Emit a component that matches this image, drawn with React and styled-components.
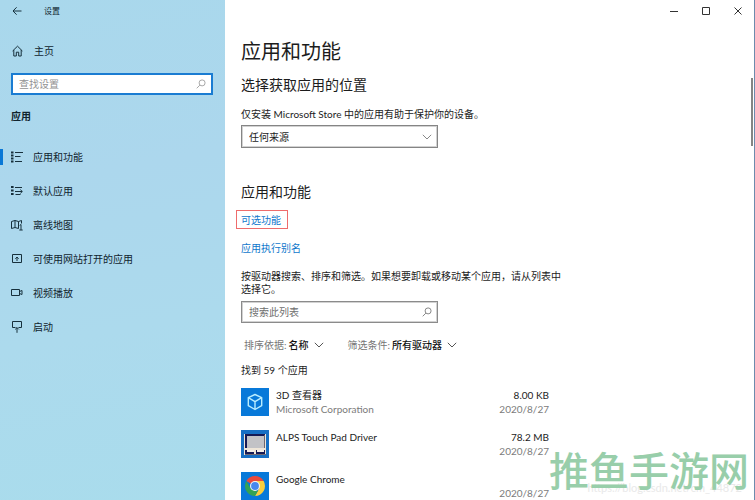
import React from "react";
import styled, { createGlobalStyle } from "styled-components";

const GlobalStyle = createGlobalStyle`
  * { box-sizing: border-box; }
  body {
    margin: 0;
    background: #fff;
    color: #1c1c1c;
    font-family: Lato, "Noto Sans CJK SC", sans-serif;
    font-size: 10px;
    line-height: 14px;
  }
  h1, h2, p, ul { margin: 0; padding: 0; font-weight: 400; }
  ul { list-style: none; }
  button, input, select { font: inherit; color: inherit; }
  a { color: inherit; text-decoration: none; }
  svg { display: block; flex: none; }
`;

const Window = styled.div`
  position: relative;
  display: grid;
  grid-template-columns: 225px minmax(0, 1fr);
  height: 100vh;
  overflow: hidden;
  border-right: 1px solid #6c8bad;
`;

const Sidebar = styled.aside`
  background: linear-gradient(170deg, #a9d8ec 0%, #acd7ed 35%, #acdaed 65%, #a9dcec 100%);
  color: #10242e;
`;

const SidebarTitle = styled.header`
  display: flex;
  align-items: center;
  gap: 22px;
  height: 22px;
  padding-left: 12px;
  font-size: 8px;
`;

const IconButton = styled.button`
  display: flex;
  align-items: center;
  justify-content: center;
  width: ${(p) => p.$width};
  height: 22px;
  padding: 0;
  border: 0;
  background: none;
`;

const HomeLink = styled.a`
  display: flex;
  align-items: center;
  gap: 11px;
  height: 14px;
  margin: 22px 0 15px;
  padding-left: 12px;
`;

const SearchField = styled.label`
  display: flex;
  align-items: center;
  width: ${(p) => p.$width};
  height: 22px;
  margin-left: ${(p) => (p.$active ? "11px" : "0")};
  padding: 0 5px 0 ${(p) => (p.$active ? "6px" : "7px")};
  border: ${(p) => (p.$active ? "2px solid #1a7cd2" : "1px solid #8b8b8b")};
  outline: ${(p) => (p.$active ? "0" : "1px solid #d2d2d2")};
  outline-offset: -2px;
  background: #fff;
`;

const SearchInput = styled.input`
  flex: 1;
  min-width: 0;
  padding: 0;
  border: 0;
  outline: 0;
  background: none;
  &::placeholder { color: ${(p) => p.$hint}; opacity: 1; }
`;

const SidebarHeading = styled.h2`
  margin: 14px 0 17px 11px;
  font-size: 10px;
  line-height: 14px;
  font-weight: 700;
`;

const NavLink = styled.a`
  display: flex;
  align-items: center;
  height: 34px;
  &::before {
    content: "";
    width: 3px;
    height: 16px;
    margin-right: 8px;
    background: ${(p) => (p.$current ? "#0a78d6" : "transparent")};
  }
  svg { margin-right: 10px; }
`;

const Main = styled.main`
  min-width: 0;
  padding-left: 16px;
`;

const CaptionBar = styled.div`
  display: flex;
  justify-content: flex-end;
  height: 22px;
`;

const PageTitle = styled.h1`
  margin: 15px 0 10px;
  font-size: 20px;
  line-height: 28px;
`;

const SectionTitle = styled.h2`
  font-size: 14px;
  line-height: 20px;
`;

const Section = styled.section`
  margin-bottom: 34px;
`;

const SourceLabel = styled.label`
  display: block;
  margin: 12px 0 4px;
`;

const SelectFrame = styled.div`
  display: grid;
  width: 197px;
  align-items: center;
  > * { grid-area: 1 / 1; }
  svg { justify-self: end; margin-right: 6px; pointer-events: none; }
`;

const Select = styled.select`
  appearance: none;
  width: 100%;
  height: 23px;
  padding: 0 24px 0 7px;
  border: 1px solid #858585;
  outline: 1px solid #d2d2d2;
  outline-offset: -2px;
  border-radius: 0;
  background: #fff;
`;

const LinkList = styled.div`
  display: flex;
  flex-direction: column;
  align-items: flex-start;
  gap: 12px;
  margin: 8px 0 15px;
`;

const TextLink = styled.a`
  color: #0f77cc;
`;

const MarkedLink = styled(TextLink)`
  margin-left: -5px;
  padding: 2px 6px 1px 4px;
  border: 1px solid #ee6c6c;
`;

const Description = styled.p`
  max-width: 320px;
  margin-bottom: 5px;
  line-height: 13px;
`;

const Filters = styled.div`
  display: flex;
  gap: 24px;
  margin: 15px 0 11px 3px;
`;

const FilterButton = styled.button`
  display: flex;
  align-items: center;
  gap: 2px;
  padding: 0;
  border: 0;
  background: none;
  color: #767676;
  svg { margin-left: 3px; }
`;

const FilterValue = styled.span`
  color: #111;
  font-weight: 500;
`;

const AppList = styled.ul`
  display: grid;
  gap: 14px;
  width: 308px;
  margin-top: 11px;
`;

const AppRow = styled.li`
  display: grid;
  grid-template-columns: 28px 1fr auto;
  column-gap: 7px;
`;

const AppText = styled.div`
  display: flex;
  flex-direction: column;
  align-items: ${(p) => (p.$end ? "flex-end" : "flex-start")};
  white-space: nowrap;
`;

const Line = styled.span`
  height: 14px;
`;

const Muted = styled(Line)`
  color: #7b7b7b;
`;

const ScrollThumb = styled.div`
  position: absolute;
  top: 78px;
  right: 1px;
  width: 2px;
  height: 68px;
  background: #858585;
`;

const SourceMark = styled.div`
  position: absolute;
  right: 12px;
  bottom: 5px;
  color: #e9e9e9;
  font-size: 11px;
`;

const SiteMark = styled.div`
  position: absolute;
  right: 5px;
  bottom: 9px;
  color: #98ceaa;
  font-family: "Noto Sans CJK SC", sans-serif;
  font-size: 40px;
  font-weight: 500;
  line-height: 44px;
  white-space: nowrap;
`;

const Glyph = ({ children, width = 12, height = 12, color = "#17303c" }) => (
  <svg width={width} height={height} viewBox={`0 0 ${width} ${height}`} fill="none" stroke={color} strokeWidth="1" aria-hidden="true">
    {children}
  </svg>
);

const BackIcon = () => (
  <Glyph width={10} height={10}><path d="M9.5 5H1M4.6 1.3 1 5l3.6 3.7" /></Glyph>
);
const HomeIcon = () => (
  <Glyph width={11}><path d="M.6 6 5.5 1.2 10.4 6M1.8 5v6h2.5V7.2h2.4V11h2.5V5" /></Glyph>
);
const SearchIcon = ({ color }) => (
  <Glyph width={10} height={10} color={color}><circle cx="6.1" cy="3.9" r="3" /><path d="M3.9 6.1.7 9.3" /></Glyph>
);
const Chevron = ({ color = "#555" }) => (
  <Glyph width={10} height={6} color={color}><path d="m.8.8 4.2 4.2L9.2.8" /></Glyph>
);
const AppsIcon = () => (
  <Glyph>
    <path d="M0 1.5h2.5M0 4.5h2.5M0 7.5h2.5M0 10.5h2.5" strokeWidth="2" />
    <path d="M4 1.5h8M4 5.5h5.5M4 10.5h7" />
  </Glyph>
);
const DefaultsIcon = () => (
  <Glyph>
    <path d="M0 2h2.6M0 5.5h2.6M0 9h2.6" strokeWidth="2" />
    <path d="M4 2.5h7M4 6.5h7.2M4.5 9.5h5M9.3 4.6l2 1.9-2 1.9" />
  </Glyph>
);
const MapIcon = () => (
  <Glyph>
    <path d="M7.5 9.5 4 8.5l-3.5 1v-7l3.5-1 3.5 1 3-1v3M4 1.5v7M7.5 2.5v7M10 5.5v5.5M8.3 11h3.4M8.7 6.4 10 5.5" />
  </Glyph>
);
const WebsiteIcon = () => (
  <Glyph><path d="M1.5 1.5h9v8h-9zM6 8V4.2M4.3 5.7 6 4.1l1.7 1.6" /></Glyph>
);
const VideoIcon = () => (
  <Glyph><path d="M.5 2.5h8v6h-8zM8.5 4.5l2.5-1v4l-2.5-1" /></Glyph>
);
const StartupIcon = () => (
  <Glyph><path d="M4.5 6.5h-3v-6h9v6h-3M6 11.8V6.5M4.2 8.4 6 6.6l1.8 1.8" /></Glyph>
);

const CubeIcon = () => (
  <svg width="28" height="28" viewBox="0 0 28 28" aria-hidden="true">
    <path fill="#0879d9" d="M0 0h28v28H0z" />
    <path d="m14 6.5 6.7 3.2v8L14 21.5l-6.7-3.8v-8zM7.3 9.7l6.7 4 6.7-4M14 13.7v7.8" fill="none" stroke="#b9edff" strokeWidth="1.4" strokeLinejoin="round" />
  </svg>
);
const TouchPadIcon = () => (
  <svg width="28" height="28" viewBox="0 0 28 28" aria-hidden="true">
    <path fill="#176fc4" d="M0 0h28v28H0z" />
    <path fill="#eee5d8" d="M3 4h22v21H3z" />
    <path fill="#151a56" d="M4 4h20v2H6v12H4zM4 20h9v4H4zM15 20h9v4h-9z" />
    <path fill="#c2c2c6" d="M6 6h17v12H6z" />
    <path fill="#f4eee6" d="M6 20h7v2H6zM16 20h7v2h-7z" />
    <path fill="#6e6872" d="M23 5h1v13h-1zM4 24h21v1H4z" />
  </svg>
);
const ChromeIcon = () => (
  <svg width="28" height="28" viewBox="0 0 28 28" aria-hidden="true">
    <path fill="#0879d9" d="M0 0h28v28H0z" />
    <path fill="#e94a3c" d="M14 14 5.34 9a10 10 0 0 1 17.32 0z" />
    <path fill="#fbcf3c" d="M14 14V9h8.66A10 10 0 0 1 14 24l4.3-7.5z" />
    <path fill="#34a353" d="M14 24A10 10 0 0 1 5.34 9l4.3 7.5L14 19l3-.5z" />
    <circle cx="14" cy="14" r="5" fill="#f5f5f5" />
    <circle cx="14" cy="14" r="3.9" fill="#4688ed" />
  </svg>
);

const navItems = [
  { label: "应用和功能", Icon: AppsIcon, current: true },
  { label: "默认应用", Icon: DefaultsIcon },
  { label: "离线地图", Icon: MapIcon },
  { label: "可使用网站打开的应用", Icon: WebsiteIcon },
  { label: "视频播放", Icon: VideoIcon },
  { label: "启动", Icon: StartupIcon },
];

const apps = [
  { name: "3D 查看器", publisher: "Microsoft Corporation", size: "8.00 KB", date: "2020/8/27", Icon: CubeIcon },
  { name: "ALPS Touch Pad Driver", size: "78.2 MB", date: "2020/8/27", Icon: TouchPadIcon },
  { name: "Google Chrome", date: "2020/8/27", Icon: ChromeIcon },
];

export default function App() {
  return (
    <>
      <GlobalStyle />
      <Window>
        <Sidebar>
          <SidebarTitle>
            <IconButton $width="10px" aria-label="返回"><BackIcon /></IconButton>
            <span>设置</span>
          </SidebarTitle>
          <HomeLink href="#home"><HomeIcon />主页</HomeLink>
          <SearchField $active $width="202px">
            <SearchInput $hint="#929292" aria-label="查找设置" placeholder="查找设置" />
            <SearchIcon color="#a8a8a8" />
          </SearchField>
          <SidebarHeading>应用</SidebarHeading>
          <nav>
            {navItems.map(({ label, Icon, current }) => (
              <NavLink key={label} href="#section" $current={current} aria-current={current ? "page" : undefined}>
                <Icon />{label}
              </NavLink>
            ))}
          </nav>
        </Sidebar>

        <Main>
          <CaptionBar>
            <IconButton $width="32px" aria-label="最小化"><Glyph width={8} height={8} color="#333"><path d="M0 4.5h8" /></Glyph></IconButton>
            <IconButton $width="32px" aria-label="最大化"><Glyph width={8} height={8} color="#333"><path d="M.5.5h7v7h-7z" /></Glyph></IconButton>
            <IconButton $width="32px" aria-label="关闭"><Glyph width={8} height={8} color="#333"><path d="m.5.5 7 7m0-7-7 7" /></Glyph></IconButton>
          </CaptionBar>
          <PageTitle>应用和功能</PageTitle>
          <Section>
            <SectionTitle>选择获取应用的位置</SectionTitle>
            <SourceLabel htmlFor="source">仅安装 Microsoft Store 中的应用有助于保护你的设备。</SourceLabel>
            <SelectFrame>
              <Select id="source"><option>任何来源</option></Select>
              <Chevron color="#888" />
            </SelectFrame>
          </Section>
          <SectionTitle>应用和功能</SectionTitle>
          <LinkList>
            <MarkedLink href="#optional">可选功能</MarkedLink>
            <TextLink href="#aliases">应用执行别名</TextLink>
          </LinkList>
          <Description>按驱动器搜索、排序和筛选。如果想要卸载或移动某个应用，请从列表中选择它。</Description>
          <SearchField $width="197px">
            <SearchInput $hint="#6e6e6e" aria-label="搜索此列表" placeholder="搜索此列表" />
            <SearchIcon color="#888" />
          </SearchField>
          <Filters>
            <FilterButton>排序依据: <FilterValue>名称</FilterValue><Chevron /></FilterButton>
            <FilterButton>筛选条件: <FilterValue>所有驱动器</FilterValue><Chevron /></FilterButton>
          </Filters>
          <p>找到 59 个应用</p>
          <AppList>
            {apps.map(({ name, publisher, size, date, Icon }) => (
              <AppRow key={name}>
                <Icon />
                <AppText><Line>{name}</Line><Muted>{publisher}</Muted></AppText>
                <AppText $end><Line>{size}</Line><Muted>{date}</Muted></AppText>
              </AppRow>
            ))}
          </AppList>
        </Main>
        <ScrollThumb />
        <SourceMark>https://blog.csdn.net/cm_44872</SourceMark>
        <SiteMark>推鱼手游网</SiteMark>
      </Window>
    </>
  );
}
